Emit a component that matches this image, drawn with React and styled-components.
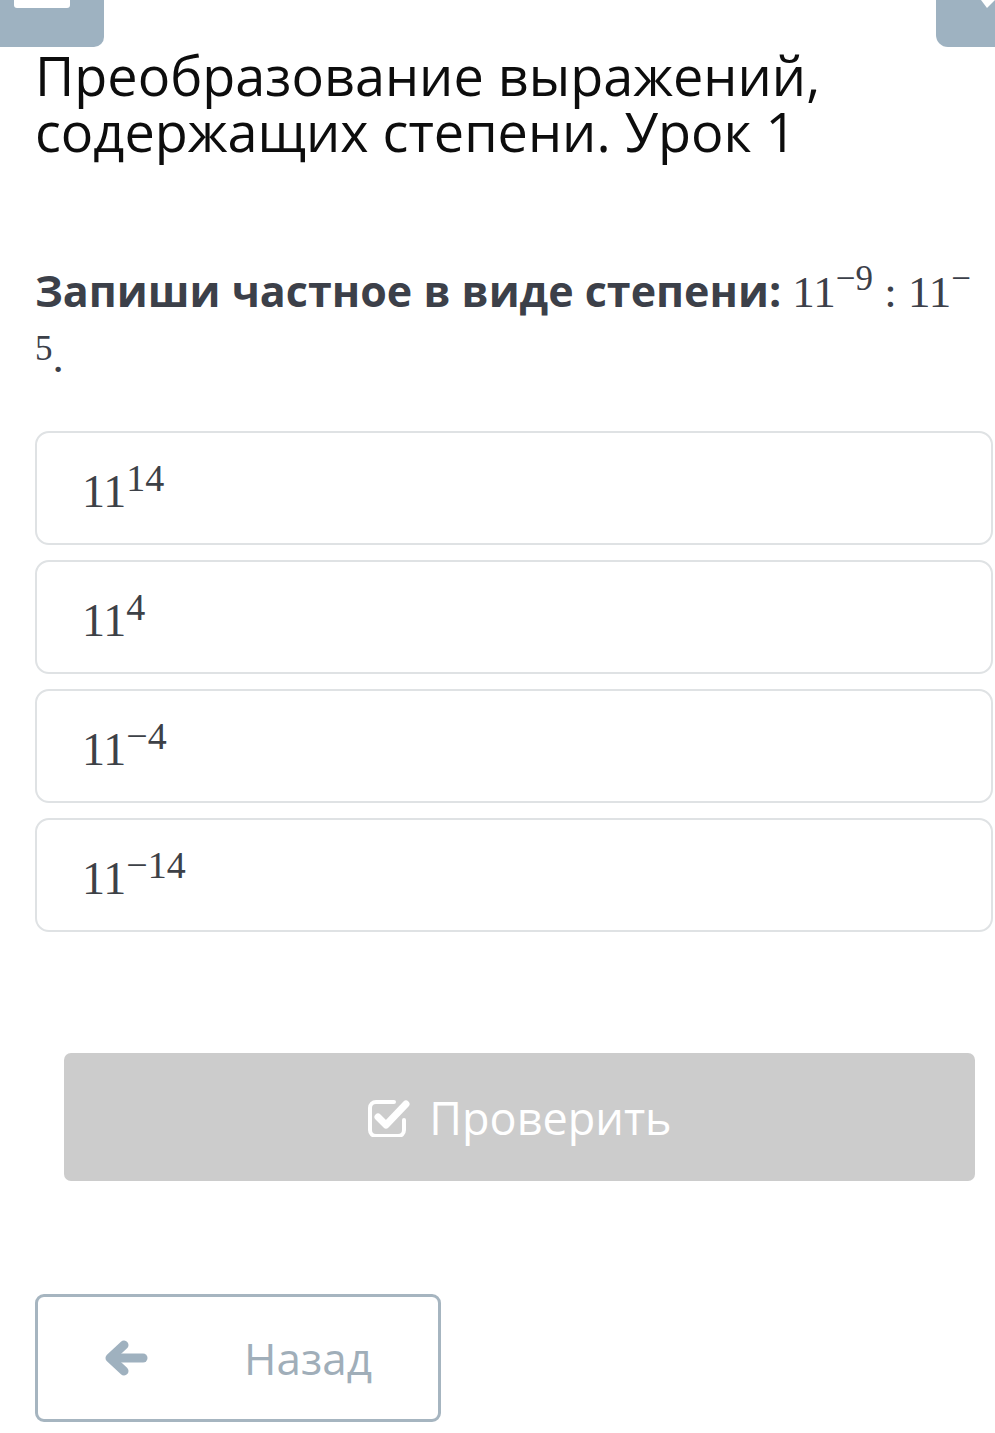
import React from 'react';
import styled, { createGlobalStyle } from 'styled-components';

const GlobalStyle = createGlobalStyle`
  body {
    margin: 0;
    background: #fff;
    font-family: "Open Sans", "Noto Sans", sans-serif;
  }
`;

const Page = styled.div`
  width: 995px;
  min-height: 1433px;
  display: flex;
  flex-direction: column;
  overflow: hidden;
`;

const TopBar = styled.div`
  display: flex;
  justify-content: space-between;
  height: 47px;
`;

const NavTab = styled.div`
  position: relative;
  width: ${p => p.$width}px;
  height: 47px;
  background: #9eb2c1;
  border-radius: ${p => (p.$side === 'left' ? '0 0 10px 0' : '0 0 0 12px')};
`;

const TabMark = styled.span`
  position: absolute;
  top: 0;
  left: 14px;
  width: 56px;
  height: 8px;
  background: #fff;
  border-radius: 0 0 3px 3px;
`;

const Title = styled.h1`
  margin: 0 0 0 35px;
  font-size: 54px;
  line-height: 56px;
  font-weight: 400;
  color: #0d0d0d;
`;

const Question = styled.p`
  margin: 100px 0 0 35px;
  font-size: 43px;
  line-height: 64px;
  color: #3c4049;
`;

const Lead = styled.strong`
  font-weight: 700;
`;

const Math = styled.span`
  font-family: "Liberation Serif", "Times New Roman", serif;
  font-size: ${p => p.$size || 45}px;
  font-weight: 400;
  white-space: nowrap;
`;

const Sup = styled.span`
  font-size: ${p => p.$size || 35}px;
  line-height: 0;
  vertical-align: ${p => p.$lift || 17}px;
`;

const Options = styled.div`
  display: flex;
  flex-direction: column;
  gap: 15px;
  margin: 42px 2px 0 35px;
`;

const Option = styled.div`
  box-sizing: border-box;
  height: 114px;
  padding: 36px 45px 0;
  border: 2px solid #dfe2e4;
  border-radius: 14px;
  color: #3d4147;
  line-height: 46px;
`;

const CheckButton = styled.button`
  margin: 121px 0 0 64px;
  width: 911px;
  height: 128px;
  display: flex;
  align-items: center;
  justify-content: center;
  gap: 18px;
  border: none;
  border-radius: 7px;
  background: #cccccc;
  color: #fff;
  font-family: "Open Sans", "Noto Sans", sans-serif;
  font-size: 45px;
  cursor: pointer;
`;

const BackButton = styled.button`
  margin: 113px 0 0 35px;
  width: 406px;
  height: 128px;
  box-sizing: border-box;
  display: flex;
  align-items: center;
  justify-content: center;
  gap: 96px;
  border: 3px solid #a6b5c0;
  border-radius: 9px;
  background: #fff;
  color: #a0aeb9;
  font-family: "Open Sans", "Noto Sans", sans-serif;
  font-size: 44px;
  cursor: pointer;
`;

const CheckIcon = () => (
  <svg width="44" height="40" viewBox="0 0 44 40" fill="none">
    <path
      d="M27 5H9a6 6 0 0 0-6 6v22a6 6 0 0 0 6 6h22a6 6 0 0 0 6-6V23"
      stroke="#fff"
      strokeWidth="4"
      strokeLinecap="round"
    />
    <path
      d="M11 20l8 8L39 7"
      stroke="#fff"
      strokeWidth="7"
      strokeLinecap="round"
      strokeLinejoin="round"
    />
  </svg>
);

const ArrowIcon = () => (
  <svg width="44" height="38" viewBox="0 0 44 38" fill="none">
    <path
      d="M20 6L6 19l14 13"
      stroke="#9fb1bf"
      strokeWidth="9"
      strokeLinecap="round"
      strokeLinejoin="round"
    />
    <path d="M8 19h31" stroke="#9fb1bf" strokeWidth="9" strokeLinecap="round" />
  </svg>
);

const answers = [
  { base: '11', exp: '14' },
  { base: '11', exp: '4' },
  { base: '11', exp: '−4' },
  { base: '11', exp: '−14' },
];

export default function App() {
  return (
    <Page>
      <GlobalStyle />
      <TopBar>
        <NavTab $width={104} $side="left">
          <TabMark />
        </NavTab>
        <NavTab $width={59} $side="right">
          <svg width="14" height="10" viewBox="0 0 14 10" style={{ position: 'absolute', top: 0, right: 0 }}>
            <path d="M0 0l6 8 8-8z" fill="#fff" />
          </svg>
        </NavTab>
      </TopBar>

      <Title>
        Преобразование выражений,
        <br />
        содержащих степени. Урок 1
      </Title>

      <Question>
        <Lead>Запиши частное в виде степени:</Lead>{' '}
        <Math>
          11<Sup>−9</Sup> : 11<Sup>−</Sup>
        </Math>
        <br />
        <Math>
          <Sup $lift={12}>5</Sup>.
        </Math>
      </Question>

      <Options>
        {answers.map(a => (
          <Option key={a.exp}>
            <Math $size={46}>
              {a.base}
              <Sup $size={38} $lift={16}>{a.exp}</Sup>
            </Math>
          </Option>
        ))}
      </Options>

      <CheckButton>
        <CheckIcon />
        Проверить
      </CheckButton>

      <BackButton>
        <ArrowIcon />
        Назад
      </BackButton>
    </Page>
  );
}
